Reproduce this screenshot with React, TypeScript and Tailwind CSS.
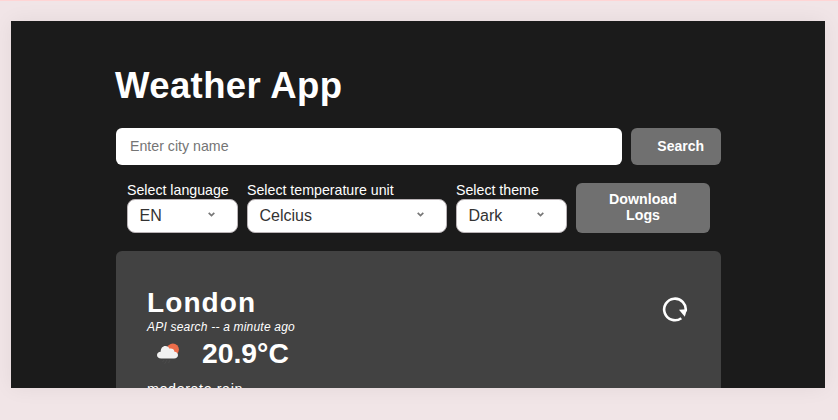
const sans = "font-['Liberation_Sans',Arial,sans-serif]";

function Select({ label, value, width }: { label: string; value: string; width: string }) {
  return (
    <label className={`flex flex-col ${width}`}>
      <span className="-mt-px mb-px h-4 whitespace-nowrap text-[14.2px] leading-4 text-white">{label}</span>
      <span className="flex h-[34px] items-center justify-between rounded-lg border border-[#b9b3b6] bg-white pr-[22px] pl-[11.5px] text-base text-[#333]">
        <span>{value}</span>
        <svg className="mb-[3px]" width="7" height="5" viewBox="0 0 7 5" fill="none" stroke="#777" strokeWidth="1.7">
          <path d="M0.7 0.8 L3.5 3.5 L6.3 0.8" />
        </svg>
      </span>
    </label>
  );
}

function RainCloud() {
  return (
    <svg className="mt-[8px] ml-[10px] shrink-0" width="23" height="22" viewBox="0 0 23 22">
      <circle cx="15.9" cy="6.5" r="6" fill="#ee6d4a" />
      <path
        d="M4.2 15.5 C1.6 15.5 0 13.9 0 11.9 C0 9.9 1.7 8.6 3.7 8.7 C3.6 5.3 5.6 2.9 8.4 2.9 C10.5 2.9 11.9 4 12.6 5.7 C15 5.1 17.3 6.5 17.4 8.7 C19.3 8.6 21 10 21 12 C21 14.1 19.4 15.5 17.1 15.5 Z"
        fill="#f2f2f2"
      />
      <path d="M7 17 L5.5 19 M10 17 L7.5 21 M13 17 L11.5 20" stroke="#4c4c4c" strokeWidth="0.8" />
    </svg>
  );
}

export default function App() {
  return (
    <div className={`h-[420px] w-[838px] overflow-hidden border-t border-[#ffd5d5] bg-[#f1e5e7] pt-5 pl-[11px] ${sans}`}>
      <main className="h-[367px] w-[814px] overflow-hidden bg-[#1b1b1b] pt-[43px] pl-[105px] text-white shadow-[0_0_20px_rgba(0,0,0,0.06)]">
        <h1 className="-ml-px h-[64px] text-[36.5px] leading-[44px] font-bold tracking-[0.4px] whitespace-nowrap">Weather App</h1>
        <form className="flex w-[605px] gap-[9px]">
          <input
            className="h-[37px] w-[506px] rounded-md bg-white px-[14px] pb-px text-[14.2px] text-black placeholder:text-[#757575]"
            placeholder="Enter city name"
          />
          <button type="button" className="h-[37px] w-[90px] rounded-md bg-[#707070] pr-[17px] text-right text-[14px] font-bold">
            Search
          </button>
        </form>
        <div className="mt-[18px] ml-[11px] flex gap-[9px]">
          <Select label="Select language" value="EN" width="w-[111px]" />
          <Select label="Select temperature unit" value="Celcius" width="w-[200px]" />
          <Select label="Select theme" value="Dark" width="w-[111px]" />
          <button type="button" className="h-[50px] w-[134px] rounded-md bg-[#707070] pr-5 pb-[2px] pl-5 text-[14.2px] leading-4 font-bold">
            Download
            <br />
            Logs
          </button>
        </div>
        <section className="mt-[18px] flex h-[300px] w-[605px] justify-between rounded-md bg-[#424242] pt-[36px] pr-[33px] pl-[31px]">
          <div>
            <h2 className="h-8 text-[28px] leading-8 font-bold tracking-[1.1px]">London</h2>
            <p className="h-4 text-[12px] leading-4 tracking-[0.2px] italic">API search -- a minute ago</p>
            <div className="flex h-[38px] gap-[22px]">
              <RainCloud />
              <span className="text-[28.3px] leading-[36px] font-bold">20.9°C</span>
            </div>
            <p className="mt-2 text-[14.4px] leading-4 tracking-[0.55px]">moderate rain</p>
          </div>
          <svg className="mt-[10px]" width="26" height="26" viewBox="0 0 26 26" fill="none">
            <path d="M19.3 21.2 A10.8 10.8 0 1 1 23.6 14.3" stroke="white" strokeWidth="2.6" />
            <path d="M17 12.8 L25 12.2 L22.8 19.8 Z" fill="white" />
          </svg>
        </section>
      </main>
    </div>
  );
}
